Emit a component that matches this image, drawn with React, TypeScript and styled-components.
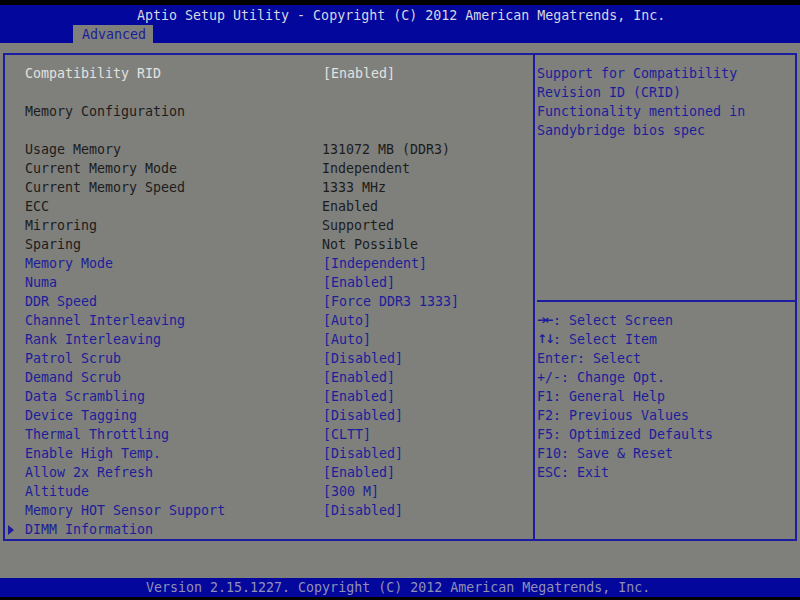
import styled, { createGlobalStyle } from "styled-components"

const BLUE = "#03079c"
const LINE = "#1c1ca0"
const GRAY = "#7f807c"
const WHITE = "#e2e2e0"
const INK = "#1d1d9a"
const DARK = "#1c1c1c"

type Row = {
  label?: string
  value?: string
  kind?: "info" | "option" | "title" | "sub" | "selected"
}

const rows: Row[] = [
  { label: "Compatibility RID", value: "[Enabled]", kind: "selected" },
  {},
  { label: "Memory Configuration", kind: "title" },
  {},
  { label: "Usage Memory", value: "131072 MB (DDR3)", kind: "info" },
  { label: "Current Memory Mode", value: "Independent", kind: "info" },
  { label: "Current Memory Speed", value: "1333 MHz", kind: "info" },
  { label: "ECC", value: "Enabled", kind: "info" },
  { label: "Mirroring", value: "Supported", kind: "info" },
  { label: "Sparing", value: "Not Possible", kind: "info" },
  { label: "Memory Mode", value: "[Independent]", kind: "option" },
  { label: "Numa", value: "[Enabled]", kind: "option" },
  { label: "DDR Speed", value: "[Force DDR3 1333]", kind: "option" },
  { label: "Channel Interleaving", value: "[Auto]", kind: "option" },
  { label: "Rank Interleaving", value: "[Auto]", kind: "option" },
  { label: "Patrol Scrub", value: "[Disabled]", kind: "option" },
  { label: "Demand Scrub", value: "[Enabled]", kind: "option" },
  { label: "Data Scrambling", value: "[Enabled]", kind: "option" },
  { label: "Device Tagging", value: "[Disabled]", kind: "option" },
  { label: "Thermal Throttling", value: "[CLTT]", kind: "option" },
  { label: "Enable High Temp.", value: "[Disabled]", kind: "option" },
  { label: "Allow 2x Refresh", value: "[Enabled]", kind: "option" },
  { label: "Altitude", value: "[300 M]", kind: "option" },
  { label: "Memory HOT Sensor Support", value: "[Disabled]", kind: "option" },
  { label: "DIMM Information", kind: "sub" },
]

const help = [
  "Support for Compatibility",
  "Revision ID (CRID)",
  "Functionality mentioned in",
  "Sandybridge bios spec",
]

const keys: { key: string; text: string; arrows?: boolean }[] = [
  { key: "➔←", text: ": Select Screen", arrows: true },
  { key: "↑↓", text: ": Select Item", arrows: true },
  { key: "Enter", text: ": Select" },
  { key: "+/-", text: ": Change Opt." },
  { key: "F1", text: ": General Help" },
  { key: "F2", text: ": Previous Values" },
  { key: "F5", text: ": Optimized Defaults" },
  { key: "F10", text: ": Save & Reset" },
  { key: "ESC", text: ": Exit" },
]

const GlobalStyle = createGlobalStyle`
  html, body {
    margin: 0;
    padding: 0;
    background: #000;
  }
  body {
    font-family: "DejaVu Sans Mono", "Liberation Mono", monospace;
    font-size: 13.3px;
  }
`

export default function App() {
  return (
    <>
      <GlobalStyle />
      <Screen>
        <Header>
          <Title>Aptio Setup Utility - Copyright (C) 2012 American Megatrends, Inc.</Title>
          <TabRow>
            <Tab>Advanced</Tab>
          </TabRow>
        </Header>

        <Body>
          <Panel>
            <Main>
              {rows.map((r, i) => (
                <Line key={i}>
                  <Marker>{r.kind === "sub" ? <Arrow /> : null}</Marker>
                  <Label $kind={r.kind}>{r.label ?? ""}</Label>
                  <Value $kind={r.kind}>{r.value ?? ""}</Value>
                </Line>
              ))}
            </Main>

            <Side>
              <HelpTop>
                {help.map((h) => (
                  <HelpLine key={h}>{h}</HelpLine>
                ))}
              </HelpTop>
              <Rule />
              <KeyList>
                {keys.map((k) => (
                  <HelpLine key={k.key}>
                    {k.arrows ? <ArrowKey>{k.key}</ArrowKey> : k.key}
                    {k.text}
                  </HelpLine>
                ))}
              </KeyList>
            </Side>
          </Panel>
        </Body>

        <Footer>Version 2.15.1227. Copyright (C) 2012 American Megatrends, Inc.</Footer>
      </Screen>
    </>
  )
}

const Screen = styled.div`
  width: 800px;
  height: 600px;
  box-sizing: border-box;
  padding: 5px 0 6px;
  display: flex;
  flex-direction: column;
  background: #000;
  white-space: pre;
`

const Header = styled.div`
  height: 38px;
  background: ${BLUE};
  display: flex;
  flex-direction: column;
`

const Title = styled.div`
  height: 20px;
  line-height: 21px;
  padding-left: 137px;
  color: #d6d6e4;
`

const TabRow = styled.div`
  height: 18px;
  display: flex;
  padding-left: 73px;
`

const Tab = styled.div`
  background: ${GRAY};
  color: ${INK};
  line-height: 19px;
  padding: 0 7px 0 9px;
`

const Body = styled.div`
  flex: 1;
  background: ${GRAY};
  padding: 10px 3px 37px;
  display: flex;
`

const Panel = styled.div`
  flex: 1;
  display: flex;
  border: 2px solid ${LINE};
`

const Main = styled.div`
  width: 528px;
  border-right: 2px solid ${LINE};
  padding-top: 9px;
  display: flex;
  flex-direction: column;
`

const Line = styled.div`
  height: 19px;
  line-height: 19px;
  display: flex;
`

const Marker = styled.div`
  width: 20px;
  display: flex;
  align-items: center;
  padding-left: 3px;
  box-sizing: border-box;
`

const Arrow = styled.span`
  width: 0;
  height: 0;
  border-top: 5px solid transparent;
  border-bottom: 5px solid transparent;
  border-left: 6px solid ${INK};
`

const Label = styled.div<{ $kind?: Row["kind"] }>`
  width: 297px;
  color: ${({ $kind }) =>
    $kind === "option" || $kind === "sub" ? INK : $kind === "selected" ? WHITE : DARK};
`

const Value = styled.div<{ $kind?: Row["kind"] }>`
  color: ${({ $kind }) => ($kind === "option" ? INK : $kind === "selected" ? WHITE : DARK)};
  padding-left: ${({ $kind }) => ($kind === "option" || $kind === "selected" ? "1px" : "0")};
`

const Side = styled.div`
  flex: 1;
  padding: 9px 0 0 2px;
  display: flex;
  flex-direction: column;
`

const HelpTop = styled.div`
  height: 236px;
`

const HelpLine = styled.div`
  height: 19px;
  line-height: 19px;
  color: ${INK};
`

const Rule = styled.div`
  height: 2px;
  background: ${LINE};
`

const KeyList = styled.div`
  margin-top: 9px;
`

const ArrowKey = styled.span`
  display: inline-block;
  width: 16px;
  overflow: hidden;
  font-family: "DejaVu Sans", sans-serif;
  font-size: 12px;
  font-weight: 700;
  letter-spacing: -2px;
  vertical-align: top;
`

const Footer = styled.div`
  height: 19px;
  line-height: 20px;
  background: ${BLUE};
  color: #8f90b4;
  padding-left: 146px;
`
